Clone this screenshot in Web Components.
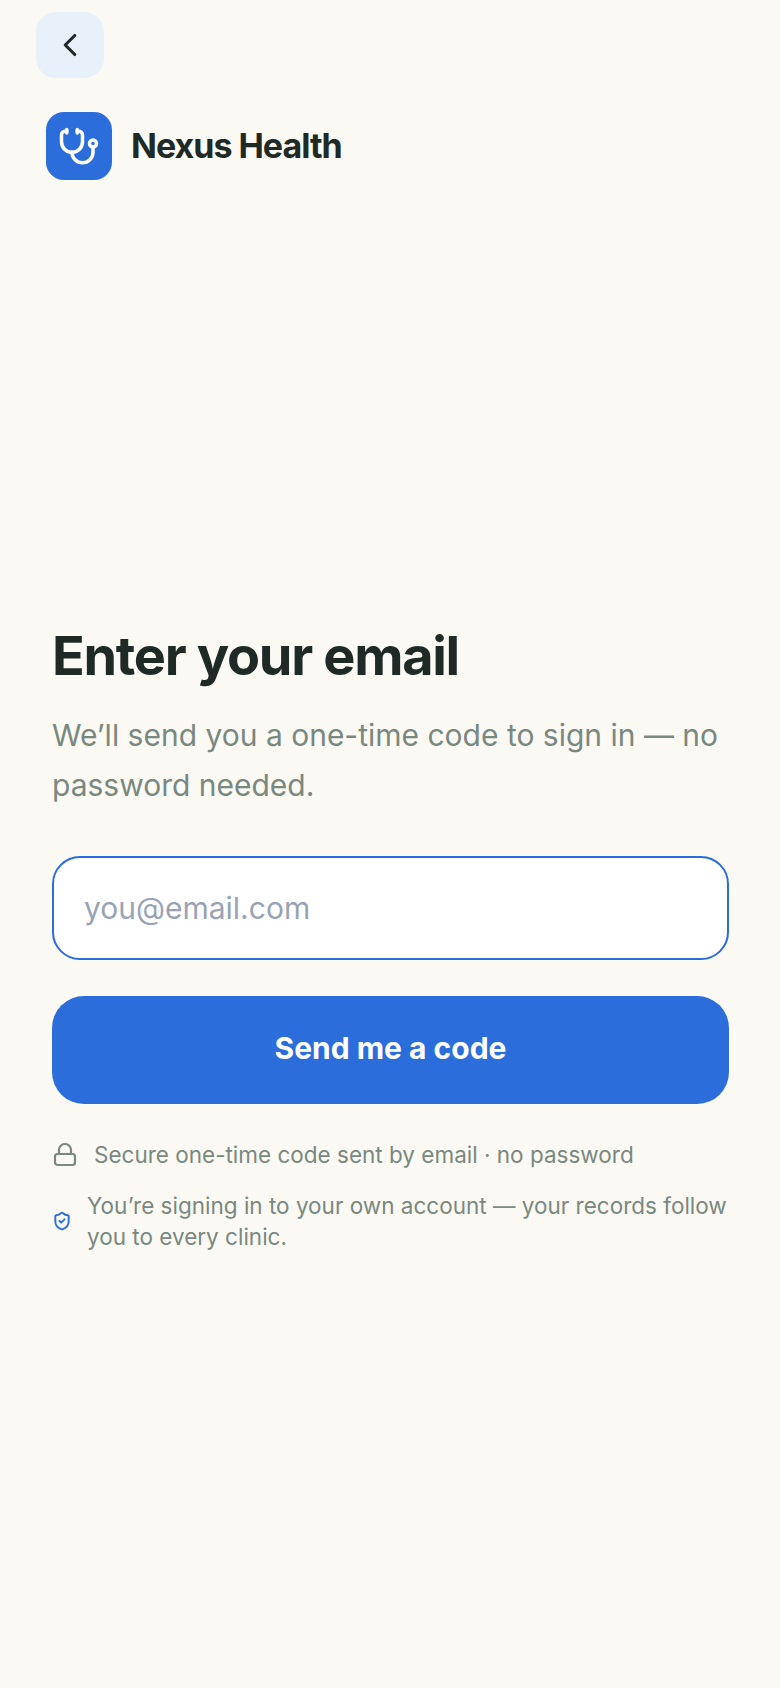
<!DOCTYPE html>
<html lang="en">
<head>
<meta charset="utf-8">
<title>Nexus Health</title>
<style>
  html, body { margin: 0; height: 100%; background: #faf9f4; }
  body { font-family: Inter, "Liberation Sans", sans-serif; }
</style>
</head>
<body>
<signin-page>
  <back-button slot="back"></back-button>
  <brand-row slot="brand">Nexus Health</brand-row>
  <span slot="title">Enter your email</span>
  <span slot="lead">We’ll send you a one-time code to sign in — no password needed.</span>
  <email-field slot="field" placeholder="you@email.com"></email-field>
  <primary-button slot="action">Send me a code</primary-button>
  <note-row slot="notes" icon="lock">Secure one-time code sent by email · no password</note-row>
  <note-row slot="notes" icon="shield">You’re signing in to your own account — your records follow you to every clinic.</note-row>
</signin-page>

<script>
class SigninPage extends HTMLElement {
  constructor() {
    super();
    this.attachShadow({ mode: 'open' });
  }

  connectedCallback() {
    this.shadowRoot.innerHTML = `
      <style>
        :host { display: block; box-sizing: border-box; height: 1688px; padding-top: 12px; color: #1f2a27; }
        .top { padding-left: 36px; }
        .brand { padding: 34px 0 0 46px; }
        main { padding: 444px 51px 0 52px; }
        h1 { margin: 0; font-size: 54px; line-height: 64px; font-weight: 700; letter-spacing: -1.3px; }
        p { margin: 22px 0 0; font-size: 30px; line-height: 50px; color: #7a8880; }
        .field { display: block; margin-top: 46px; }
        .action { display: block; margin-top: 36px; }
        .notes { display: flex; flex-direction: column; gap: 20px; margin-top: 35px; }
      </style>
      <div class="top"><slot name="back"></slot></div>
      <div class="brand"><slot name="brand"></slot></div>
      <main>
        <h1><slot name="title"></slot></h1>
        <p><slot name="lead"></slot></p>
        <div class="field"><slot name="field"></slot></div>
        <div class="action"><slot name="action"></slot></div>
        <div class="notes"><slot name="notes"></slot></div>
      </main>
    `;
  }
}

class BackButton extends HTMLElement {
  constructor() {
    super();
    this.attachShadow({ mode: 'open' });
  }

  connectedCallback() {
    this.shadowRoot.innerHTML = `
      <style>
        :host { display: flex; align-items: center; justify-content: center; width: 68px; height: 66px; border-radius: 20px; background: #e8f0f9; }
        svg { display: block; }
      </style>
      <svg width="38" height="38" viewBox="0 0 24 24" fill="none" stroke="#1f2a27" stroke-width="2" stroke-linecap="round" stroke-linejoin="round">
        <path d="M15 18l-6-6 6-6"/>
      </svg>
    `;
  }
}

class BrandRow extends HTMLElement {
  constructor() {
    super();
    this.attachShadow({ mode: 'open' });
  }

  connectedCallback() {
    this.shadowRoot.innerHTML = `
      <style>
        :host { display: flex; align-items: center; gap: 20px; font-size: 34px; font-weight: 700; letter-spacing: -1px; color: #1f2a27; }
        .mark { display: flex; align-items: center; justify-content: center; box-sizing: border-box; width: 66px; height: 68px; padding-top: 2px; border-radius: 18px; background: #2a6ddb; }
        .name { margin: -2px 0 0 -1px; }
        svg { display: block; }
      </style>
      <div class="mark">
        <svg width="42" height="42" viewBox="0 0 24 24" fill="none" stroke="#fff" stroke-width="2" stroke-linecap="round" stroke-linejoin="round">
          <path d="M11 2v2"/>
          <path d="M5 2v2"/>
          <path d="M5 3H4a2 2 0 0 0-2 2v4a6 6 0 0 0 12 0V5a2 2 0 0 0-2-2h-1"/>
          <path d="M8 15a6 6 0 0 0 12 0v-3"/>
          <circle cx="20" cy="10" r="2"/>
        </svg>
      </div>
      <span class="name"><slot></slot></span>
    `;
  }
}

class EmailField extends HTMLElement {
  constructor() {
    super();
    this.attachShadow({ mode: 'open' });
  }

  connectedCallback() {
    const placeholder = this.getAttribute('placeholder') || '';
    this.shadowRoot.innerHTML = `
      <style>
        :host { display: block; }
        input {
          display: block; box-sizing: border-box; width: 100%; height: 104px; padding: 0 30px; outline: none;
          border: 2px solid #2a6ddb; border-radius: 28px; background: #fff;
          font: 400 30px Inter, "Liberation Sans", sans-serif; color: #1f2a27;
        }
        input::placeholder { color: #9aa3b5; opacity: 1; }
      </style>
      <input type="email" placeholder="${placeholder}">
    `;
  }
}

class PrimaryButton extends HTMLElement {
  constructor() {
    super();
    this.attachShadow({ mode: 'open' });
  }

  connectedCallback() {
    this.shadowRoot.innerHTML = `
      <style>
        :host { display: flex; align-items: center; justify-content: center; box-sizing: border-box; height: 108px; padding-bottom: 4px; border-radius: 32px; background: #2a6ddb; color: #fff; font-size: 30px; font-weight: 700; }
      </style>
      <slot></slot>
    `;
  }
}

// icons for the small print under the button
const NOTE_ICONS = {
  lock: `<svg width="24" height="24" viewBox="0 0 24 24" fill="none" stroke="#7a8880" stroke-width="2.2" stroke-linecap="round" stroke-linejoin="round"><rect x="2" y="11" width="20" height="11" rx="2.5"/><path d="M6 11V7a6 6 0 0 1 12 0v4"/></svg>`,
  shield: `<svg width="20" height="20" viewBox="0 0 24 24" fill="none" stroke="#2a6ddb" stroke-width="2.3" stroke-linecap="round" stroke-linejoin="round"><path d="M20 13c0 5-3.5 7.5-7.66 8.95a1 1 0 0 1-.67-.01C7.5 20.5 4 18 4 13V6a1 1 0 0 1 1-1c2 0 4.5-1.2 6.24-2.72a1.17 1.17 0 0 1 1.52 0C14.51 3.81 17 5 19 5a1 1 0 0 1 1 1z"/><path d="M9 12l2 2 4-4"/></svg>`
};

class NoteRow extends HTMLElement {
  constructor() {
    super();
    this.attachShadow({ mode: 'open' });
  }

  connectedCallback() {
    const icon = this.getAttribute('icon');
    this.shadowRoot.innerHTML = `
      <style>
        :host { display: flex; align-items: center; gap: 15px; font-size: 22.5px; line-height: 31px; color: #7a8880; }
        :host([icon="lock"]) { gap: 17px; padding-left: 1px; }
        svg { display: block; flex: none; }
      </style>
      ${NOTE_ICONS[icon] || ''}
      <span><slot></slot></span>
    `;
  }
}

customElements.define('signin-page', SigninPage);
customElements.define('back-button', BackButton);
customElements.define('brand-row', BrandRow);
customElements.define('email-field', EmailField);
customElements.define('primary-button', PrimaryButton);
customElements.define('note-row', NoteRow);
</script>
</body>
</html>
